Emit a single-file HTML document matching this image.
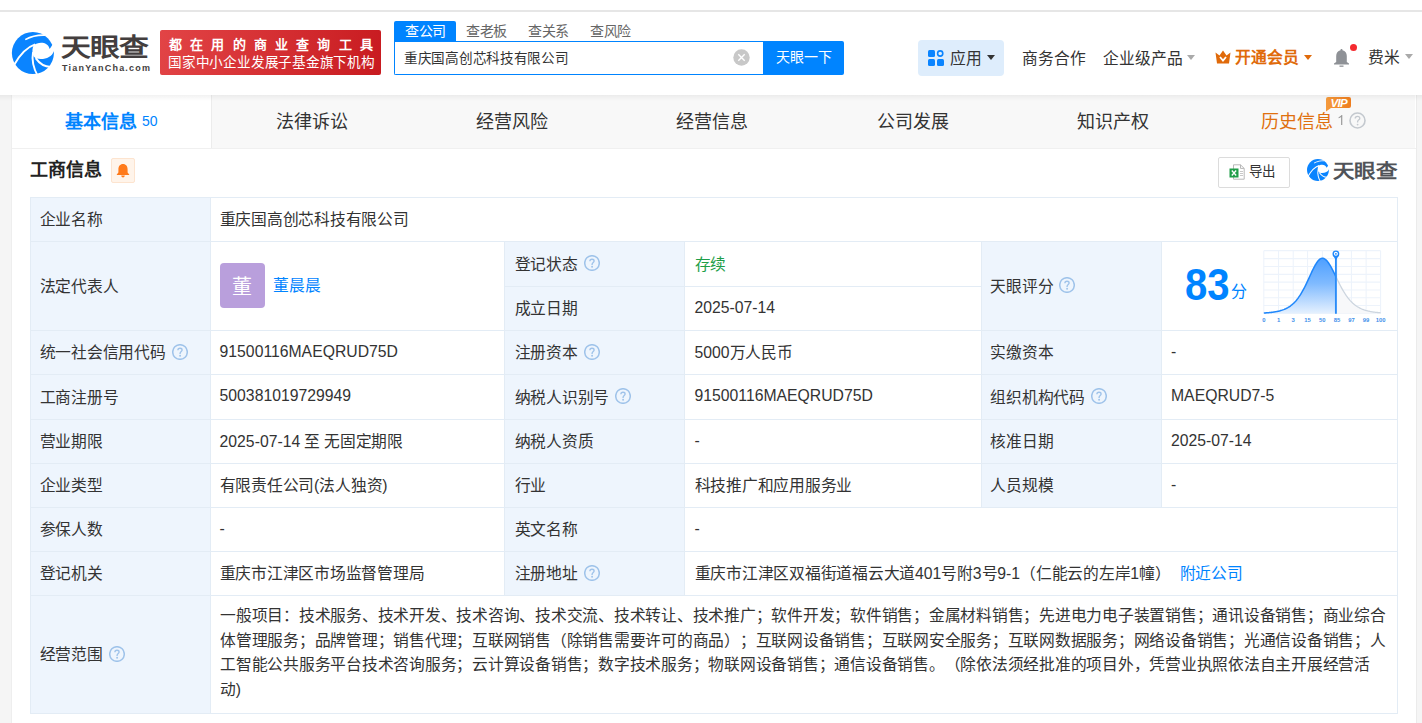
<!DOCTYPE html>
<html lang="zh-CN"><head><meta charset="utf-8">
<style>
*{box-sizing:border-box;margin:0;padding:0}
html,body{text-spacing-trim:space-all;width:1422px;height:723px;overflow:hidden;background:#f5f5f5;font-family:"Liberation Sans",sans-serif;color:#333}
.abs{position:absolute}
#topstrip{position:absolute;left:0;top:0;width:1422px;height:10px;background:#fff}
#topline{position:absolute;left:0;top:10px;width:1422px;height:2px;background:#e6e6e6}
#header{position:absolute;left:0;top:12px;width:1422px;height:83px;background:#fff}
#shadow{position:absolute;left:0;top:95px;width:1422px;height:6px;background:linear-gradient(rgba(0,0,0,0.05),rgba(0,0,0,0));z-index:5}
#panel{position:absolute;left:12px;top:95px;width:1404px;height:640px;background:#fff}
.t{position:absolute;white-space:nowrap;line-height:1}
.cellt{position:absolute;height:22px;display:flex;align-items:center;white-space:nowrap;font-size:15.75px;color:#333;letter-spacing:-0.25px}
.q{margin-left:6px;flex:none}
.l{letter-spacing:0}
.scope{font-size:15.75px;color:#333;letter-spacing:-0.25px}
</style></head><body>
<div id="topstrip"></div>
<div id="topline"></div>
<div id="header"></div>
<svg class="abs" style="left:8px;top:28px" width="50" height="50" viewBox="0 0 723 723">
<circle cx="360" cy="362" r="304" fill="#0a84ff"/>
<path d="M372,246 C430,200 575,185 602,302 C615,285 630,262 640,245 L720,245 L720,335 L664,335 C630,425 530,462 412,442 C350,422 338,320 372,246 Z" fill="#fff"/>
<path d="M250,168 C340,118 450,98 545,104" stroke="#fff" stroke-width="24" fill="none"/>
<path d="M90,532 C170,390 270,280 392,238" stroke="#fff" stroke-width="28" fill="none"/>
<path d="M362,350 C340,470 368,580 430,692" stroke="#fff" stroke-width="28" fill="none"/>
<path d="M400,436 C460,522 530,562 618,564" stroke="#fff" stroke-width="28" fill="none"/>
</svg>
<div class="t" id="logotxt" style="left:61px;top:36px;font-size:24.5px;font-weight:bold;color:#433e3e;transform:scaleX(1.215);transform-origin:0 0">天眼查</div>
<div class="t" id="logoen" style="left:62px;top:64px;font-size:9px;font-weight:bold;color:#433e3e;letter-spacing:1.2px">TianYanCha.com</div>
<div class="abs" id="banner" style="left:160px;top:30px;width:221px;height:45px;border-radius:2px;background:linear-gradient(100deg,#e24446,#c81b20)"></div>
<div class="t" id="ban1" style="left:169px;top:37.5px;font-size:13px;font-weight:bold;color:#fff;letter-spacing:8.2px">都在用的商业查询工具</div>
<div class="t" id="ban2" style="left:168px;top:56px;font-size:13.6px;letter-spacing:-0.21px;font-weight:500;color:#fff">国家中小企业发展子基金旗下机构</div>
<div class="abs" style="left:394px;top:21px;width:62px;height:21px;background:#0084ff;border-radius:2px 2px 0 0"></div>
<div class="t" style="left:405px;top:24px;font-size:14px;letter-spacing:-0.4px;color:#fff">查公司</div>
<div class="t" style="left:466px;top:24px;font-size:14px;letter-spacing:-0.4px;color:#666">查老板</div>
<div class="t" style="left:528px;top:24px;font-size:14px;letter-spacing:-0.4px;color:#666">查关系</div>
<div class="t" style="left:590px;top:24px;font-size:14px;letter-spacing:-0.4px;color:#666">查风险</div>
<div class="abs" style="left:394px;top:41px;width:370px;height:34px;border:1px solid #0084ff;border-right:none;border-radius:0 0 0 2px;background:#fff"></div>
<div class="t" id="srch" style="left:404px;top:52px;font-size:13.6px;letter-spacing:-0.3px;color:#333">重庆国高创芯科技有限公司</div>
<svg class="abs" style="left:733px;top:49px" width="17" height="17" viewBox="0 0 17 17"><circle cx="8.5" cy="8.5" r="8.2" fill="#c8c8c8"/><path d="M5.3,5.3 L11.7,11.7 M11.7,5.3 L5.3,11.7" stroke="#fff" stroke-width="1.4"/></svg>
<div class="abs" style="left:763px;top:41px;width:81px;height:34px;background:#0084ff;border-radius:0 2px 2px 0"></div>
<div class="t" style="left:776px;top:50px;font-size:14px;color:#fff">天眼一下</div>
<div class="abs" style="left:918px;top:40px;width:86px;height:36px;background:#deedfc;border-radius:4px"></div>
<svg class="abs" style="left:928px;top:50px" width="16" height="16" viewBox="0 0 16 16"><rect x="0" y="0" width="7" height="7" rx="1.5" fill="#0a84ff"/><circle cx="12.2" cy="3.5" r="2.6" fill="none" stroke="#0a84ff" stroke-width="1.6"/><rect x="0" y="9" width="7" height="7" rx="1.5" fill="#0a84ff"/><rect x="9" y="9" width="7" height="7" rx="1.5" fill="#0a84ff"/></svg>
<div class="t" style="left:950px;top:51px;font-size:15.75px;color:#333">应用</div>
<svg class="abs" style="left:987px;top:55px" width="8" height="5" viewBox="0 0 8 5"><path d="M0,0 L8,0 L4,5Z" fill="#333"/></svg>
<div class="t" style="left:1022px;top:50.5px;font-size:15.75px;color:#333">商务合作</div>
<div class="t" style="left:1103px;top:50.5px;font-size:15.75px;color:#333">企业级产品</div>
<svg class="abs" style="left:1187px;top:55px" width="8" height="5" viewBox="0 0 8 5"><path d="M0,0 L8,0 L4,5Z" fill="#aaa"/></svg>
<svg class="abs" style="left:1215px;top:50px" width="16" height="14" viewBox="0 0 16 14"><path d="M0.5,2.5 L4.5,5.5 L8,0.5 L11.5,5.5 L15.5,2.5 L14,13.5 L2,13.5 Z" fill="#e06a0a"/><path d="M5,7 L8,10.5 L11,7" stroke="#fff" stroke-width="1.8" fill="none"/></svg>
<div class="t" style="left:1235px;top:50px;font-size:15.75px;font-weight:bold;color:#e06a0a">开通会员</div>
<svg class="abs" style="left:1304px;top:55px" width="8" height="5" viewBox="0 0 8 5"><path d="M0,0 L8,0 L4,5Z" fill="#e06a0a"/></svg>
<svg class="abs" style="left:1333px;top:48px" width="17" height="19" viewBox="0 0 17 19"><path d="M8.5,1 C9.3,1 9.5,1.6 9.5,2.2 C12.3,2.8 13.8,5 13.8,8 L13.8,14 L16,15.5 L16,16.5 L1,16.5 L1,15.5 L3.2,14 L3.2,8 C3.2,5 4.7,2.8 7.5,2.2 C7.5,1.6 7.7,1 8.5,1Z" fill="#8e9196"/><rect x="6.5" y="17.5" width="4" height="1.3" fill="#8e9196"/></svg>
<div class="abs" style="left:1350px;top:44px;width:7px;height:7px;border-radius:50%;background:#f52a2f"></div>
<div class="t" style="left:1368px;top:50px;font-size:15.75px;color:#333">费米</div>
<svg class="abs" style="left:1405px;top:54px" width="8" height="5" viewBox="0 0 8 5"><path d="M0,0 L8,0 L4,5Z" fill="#aaa"/></svg>

<div id="panel"></div>
<div class="abs" style="left:11px;top:95px;width:1px;height:628px;background:#eeeeee"></div>
<div class="abs" style="left:1416px;top:95px;width:1px;height:628px;background:#ebebeb"></div>

<div class="abs" style="left:211px;top:95px;width:1204px;height:53px;background:#f8f8f8"></div>
<div class="abs" style="left:211px;top:95px;width:1px;height:53px;background:#ececec"></div>
<div class="abs" style="left:12px;top:148px;width:1404px;height:1px;background:#f0f0f0"></div>
<div class="t" id="tab1" style="left:65px;top:113px;font-size:18px;font-weight:bold;color:#0084ff">基本信息</div>
<div class="t" id="tab1n" style="left:142px;top:114px;font-size:14px;color:#0084ff">50</div>
<div class="t" style="left:276px;top:113px;font-size:18px;color:#333">法律诉讼</div>
<div class="t" style="left:476px;top:113px;font-size:18px;color:#333">经营风险</div>
<div class="t" style="left:676px;top:113px;font-size:18px;color:#333">经营信息</div>
<div class="t" style="left:877px;top:113px;font-size:18px;color:#333">公司发展</div>
<div class="t" style="left:1077px;top:113px;font-size:18px;color:#333">知识产权</div>
<div class="t" style="left:1261px;top:113px;font-size:18px;color:#e0700f">历史信息</div>
<svg class="abs" style="left:1338px;top:115px" width="6" height="10" viewBox="0 0 6 10"><path d="M4.3,0 L4.3,10 L3.1,10 L3.1,1.9 C2.5,2.5 1.6,3 0.6,3.3 L0.6,2.2 C1.8,1.7 2.9,0.9 3.5,0 Z" fill="#999"/></svg>
<svg class="abs" style="left:1349px;top:112px" width="17" height="17" viewBox="0 0 17 17"><circle cx="8.5" cy="8.5" r="7.5" fill="none" stroke="#c4c9cf" stroke-width="1.6"/><path d="M6.2,6.6 C6.2,5.2 7.2,4.4 8.5,4.4 C9.8,4.4 10.8,5.2 10.8,6.4 C10.8,7.8 8.6,8 8.6,9.8 L8.6,10.4" fill="none" stroke="#c4c9cf" stroke-width="1.3"/><circle cx="8.6" cy="12.6" r="0.9" fill="#c6cad0"/></svg>
<svg class="abs" style="left:1326px;top:96px" width="26" height="16" viewBox="0 0 26 16"><defs><linearGradient id="vg" x1="0" y1="0" x2="1" y2="0"><stop offset="0" stop-color="#f59a3c"/><stop offset="1" stop-color="#ee7d1f"/></linearGradient></defs><path d="M2,1 L23,1 Q25,1 25,3 L25,10 Q25,12 23,12 L5,12 L0,15.5 L0,3 Q0,1 2,1Z" fill="url(#vg)"/><text x="12.8" y="10.6" font-family="Liberation Sans" font-size="11.5" font-weight="bold" font-style="italic" fill="#fff" text-anchor="middle" letter-spacing="-0.6">VIP</text></svg>
<div class="t" id="sec" style="left:30px;top:161px;font-size:18px;font-weight:bold;color:#222">工商信息</div>
<div class="abs" style="left:111px;top:158px;width:24px;height:25px;background:#fff4ea;border:1px solid #fde4cf;border-radius:2px"></div>
<svg class="abs" style="left:116px;top:163px" width="14" height="15" viewBox="0 0 14 15"><path d="M7,1 C10,1 11.6,3.4 11.6,6.4 L11.6,9.6 L13.2,11.4 L13.2,12 L0.8,12 L0.8,11.4 L2.4,9.6 L2.4,6.4 C2.4,3.4 4,1 7,1Z" fill="#ff7a1a"/><path d="M5.2,12.6 L8.8,12.6 C8.8,13.8 8,14.4 7,14.4 C6,14.4 5.2,13.8 5.2,12.6Z" fill="#ff7a1a"/></svg>
<div class="abs" style="left:1218px;top:157px;width:72px;height:31px;border:1px solid #dcdcdc;border-radius:2px;background:#fff"></div>
<svg class="abs" style="left:1229px;top:164px" width="16" height="16" viewBox="0 0 16 16"><path d="M4.5,0.8 L11.5,0.8 L15.2,4.4 L15.2,15.2 L4.5,15.2 Z" fill="#fff" stroke="#b8b8b8" stroke-width="1"/><path d="M11.5,0.8 L11.5,4.4 L15.2,4.4" fill="none" stroke="#b8b8b8" stroke-width="1"/><rect x="11" y="7" width="3" height="1" fill="#c8c8c8"/><rect x="11" y="9" width="3" height="1" fill="#c8c8c8"/><rect x="11" y="11" width="3" height="1" fill="#c8c8c8"/><rect x="0.5" y="4.5" width="9" height="9" fill="#1f9d48"/><path d="M2.8,6.5 L7.2,11.5 M7.2,6.5 L2.8,11.5" stroke="#fff" stroke-width="1.3"/></svg>
<div class="t" style="left:1249px;top:165px;font-size:13.5px;color:#333">导出</div>
<svg class="abs" style="left:1305px;top:156.5px" width="26" height="26" viewBox="0 0 723 723">
<circle cx="360" cy="362" r="304" fill="#0a84ff"/>
<path d="M368,250 C430,200 570,190 602,302 C615,285 630,262 640,245 L720,245 L720,340 L668,340 C630,425 530,460 412,440 C352,420 340,320 368,250 Z" fill="#fff"/>
<path d="M252,168 C340,120 450,98 540,106" stroke="#fff" stroke-width="24" fill="none"/>
<path d="M92,530 C170,390 270,280 392,238" stroke="#fff" stroke-width="28" fill="none"/>
<path d="M364,350 C342,470 370,580 430,690" stroke="#fff" stroke-width="28" fill="none"/>
<path d="M402,436 C460,520 530,560 615,562" stroke="#fff" stroke-width="28" fill="none"/>
</svg>
<div class="t" id="logo2" style="left:1333px;top:161.5px;font-size:19px;font-weight:bold;color:#505358;transform:scaleX(1.13);transform-origin:0 0">天眼查</div>
<!--TABLE-->
<div class="abs" style="left:30px;top:197px;width:180px;height:44px;background:#eef5fd;border-left:1px solid #e3ecf5;border-top:1px solid #e3ecf5"></div>
<div class="cellt" style="left:39.6px;top:207.5px;"><span>企业名称</span></div>
<div class="abs" style="left:210px;top:197px;width:1187px;height:44px;background:#fff;border-left:1px solid #e3ecf5;border-top:1px solid #e3ecf5"></div>
<div class="cellt" style="left:219.6px;top:207.5px;"><span>重庆国高创芯科技有限公司</span></div>
<div class="abs" style="left:30px;top:241px;width:180px;height:89px;background:#eef5fd;border-left:1px solid #e3ecf5;border-top:1px solid #e3ecf5"></div>
<div class="cellt" style="left:39.6px;top:274.0px;"><span>法定代表人</span></div>
<div class="abs" style="left:210px;top:241px;width:294px;height:89px;background:#fff;border-left:1px solid #e3ecf5;border-top:1px solid #e3ecf5"></div>
<div class="abs" style="left:504px;top:241px;width:180px;height:45px;background:#eef5fd;border-left:1px solid #e3ecf5;border-top:1px solid #e3ecf5"></div>
<div class="cellt" style="left:514.5px;top:252.0px;"><span>登记状态</span><svg class="q" width="16" height="16" viewBox="0 0 16 16"><circle cx="8" cy="8" r="7.3" fill="none" stroke="#9fc3ea" stroke-width="1.5"/><path d="M5.9,6.2 C5.9,4.9 6.8,4.2 8,4.2 C9.2,4.2 10.1,4.9 10.1,6 C10.1,7.4 8.1,7.6 8.1,9.3 L8.1,9.9" fill="none" stroke="#9fc3ea" stroke-width="1.35"/><circle cx="8.1" cy="11.8" r="0.95" fill="#9fc3ea"/></svg></div>
<div class="abs" style="left:684px;top:241px;width:297px;height:45px;background:#fff;border-left:1px solid #e3ecf5;border-top:1px solid #e3ecf5"></div>
<div class="cellt" style="left:694.5px;top:252.0px;"><span><span style="color:#1e9e48">存续</span></span></div>
<div class="abs" style="left:504px;top:286px;width:180px;height:44px;background:#eef5fd;border-left:1px solid #e3ecf5;border-top:1px solid #e3ecf5"></div>
<div class="cellt" style="left:514.5px;top:296.5px;"><span>成立日期</span></div>
<div class="abs" style="left:684px;top:286px;width:297px;height:44px;background:#fff;border-left:1px solid #e3ecf5;border-top:1px solid #e3ecf5"></div>
<div class="cellt" style="left:694.5px;top:296.5px;"><span><span class="l">2025-07-14</span></span></div>
<div class="abs" style="left:981px;top:241px;width:180px;height:89px;background:#eef5fd;border-left:1px solid #e3ecf5;border-top:1px solid #e3ecf5"></div>
<div class="cellt" style="left:990.4px;top:274.0px;"><span>天眼评分</span><svg class="q" width="16" height="16" viewBox="0 0 16 16"><circle cx="8" cy="8" r="7.3" fill="none" stroke="#9fc3ea" stroke-width="1.5"/><path d="M5.9,6.2 C5.9,4.9 6.8,4.2 8,4.2 C9.2,4.2 10.1,4.9 10.1,6 C10.1,7.4 8.1,7.6 8.1,9.3 L8.1,9.9" fill="none" stroke="#9fc3ea" stroke-width="1.35"/><circle cx="8.1" cy="11.8" r="0.95" fill="#9fc3ea"/></svg></div>
<div class="abs" style="left:1161px;top:241px;width:236px;height:89px;background:#fff;border-left:1px solid #e3ecf5;border-top:1px solid #e3ecf5"></div>
<div class="abs" style="left:30px;top:330px;width:180px;height:44px;background:#eef5fd;border-left:1px solid #e3ecf5;border-top:1px solid #e3ecf5"></div>
<div class="cellt" style="left:39.6px;top:340.5px;"><span>统一社会信用代码</span><svg class="q" width="16" height="16" viewBox="0 0 16 16"><circle cx="8" cy="8" r="7.3" fill="none" stroke="#9fc3ea" stroke-width="1.5"/><path d="M5.9,6.2 C5.9,4.9 6.8,4.2 8,4.2 C9.2,4.2 10.1,4.9 10.1,6 C10.1,7.4 8.1,7.6 8.1,9.3 L8.1,9.9" fill="none" stroke="#9fc3ea" stroke-width="1.35"/><circle cx="8.1" cy="11.8" r="0.95" fill="#9fc3ea"/></svg></div>
<div class="abs" style="left:210px;top:330px;width:294px;height:44px;background:#fff;border-left:1px solid #e3ecf5;border-top:1px solid #e3ecf5"></div>
<div class="cellt" style="left:219.6px;top:340.5px;"><span><span class="l">91500116MAEQRUD75D</span></span></div>
<div class="abs" style="left:504px;top:330px;width:180px;height:44px;background:#eef5fd;border-left:1px solid #e3ecf5;border-top:1px solid #e3ecf5"></div>
<div class="cellt" style="left:514.5px;top:340.5px;"><span>注册资本</span><svg class="q" width="16" height="16" viewBox="0 0 16 16"><circle cx="8" cy="8" r="7.3" fill="none" stroke="#9fc3ea" stroke-width="1.5"/><path d="M5.9,6.2 C5.9,4.9 6.8,4.2 8,4.2 C9.2,4.2 10.1,4.9 10.1,6 C10.1,7.4 8.1,7.6 8.1,9.3 L8.1,9.9" fill="none" stroke="#9fc3ea" stroke-width="1.35"/><circle cx="8.1" cy="11.8" r="0.95" fill="#9fc3ea"/></svg></div>
<div class="abs" style="left:684px;top:330px;width:297px;height:44px;background:#fff;border-left:1px solid #e3ecf5;border-top:1px solid #e3ecf5"></div>
<div class="cellt" style="left:694.5px;top:340.5px;"><span><span class="l">5000</span>万人民币</span></div>
<div class="abs" style="left:981px;top:330px;width:180px;height:44px;background:#eef5fd;border-left:1px solid #e3ecf5;border-top:1px solid #e3ecf5"></div>
<div class="cellt" style="left:990.4px;top:340.5px;"><span>实缴资本</span></div>
<div class="abs" style="left:1161px;top:330px;width:236px;height:44px;background:#fff;border-left:1px solid #e3ecf5;border-top:1px solid #e3ecf5"></div>
<div class="cellt" style="left:1171px;top:340.5px;"><span><span class="l">-</span></span></div>
<div class="abs" style="left:30px;top:374px;width:180px;height:45px;background:#eef5fd;border-left:1px solid #e3ecf5;border-top:1px solid #e3ecf5"></div>
<div class="cellt" style="left:39.6px;top:385.0px;"><span>工商注册号</span></div>
<div class="abs" style="left:210px;top:374px;width:294px;height:45px;background:#fff;border-left:1px solid #e3ecf5;border-top:1px solid #e3ecf5"></div>
<div class="cellt" style="left:219.6px;top:385.0px;"><span><span class="l">500381019729949</span></span></div>
<div class="abs" style="left:504px;top:374px;width:180px;height:45px;background:#eef5fd;border-left:1px solid #e3ecf5;border-top:1px solid #e3ecf5"></div>
<div class="cellt" style="left:514.5px;top:385.0px;"><span>纳税人识别号</span><svg class="q" width="16" height="16" viewBox="0 0 16 16"><circle cx="8" cy="8" r="7.3" fill="none" stroke="#9fc3ea" stroke-width="1.5"/><path d="M5.9,6.2 C5.9,4.9 6.8,4.2 8,4.2 C9.2,4.2 10.1,4.9 10.1,6 C10.1,7.4 8.1,7.6 8.1,9.3 L8.1,9.9" fill="none" stroke="#9fc3ea" stroke-width="1.35"/><circle cx="8.1" cy="11.8" r="0.95" fill="#9fc3ea"/></svg></div>
<div class="abs" style="left:684px;top:374px;width:297px;height:45px;background:#fff;border-left:1px solid #e3ecf5;border-top:1px solid #e3ecf5"></div>
<div class="cellt" style="left:694.5px;top:385.0px;"><span><span class="l">91500116MAEQRUD75D</span></span></div>
<div class="abs" style="left:981px;top:374px;width:180px;height:45px;background:#eef5fd;border-left:1px solid #e3ecf5;border-top:1px solid #e3ecf5"></div>
<div class="cellt" style="left:990.4px;top:385.0px;"><span>组织机构代码</span><svg class="q" width="16" height="16" viewBox="0 0 16 16"><circle cx="8" cy="8" r="7.3" fill="none" stroke="#9fc3ea" stroke-width="1.5"/><path d="M5.9,6.2 C5.9,4.9 6.8,4.2 8,4.2 C9.2,4.2 10.1,4.9 10.1,6 C10.1,7.4 8.1,7.6 8.1,9.3 L8.1,9.9" fill="none" stroke="#9fc3ea" stroke-width="1.35"/><circle cx="8.1" cy="11.8" r="0.95" fill="#9fc3ea"/></svg></div>
<div class="abs" style="left:1161px;top:374px;width:236px;height:45px;background:#fff;border-left:1px solid #e3ecf5;border-top:1px solid #e3ecf5"></div>
<div class="cellt" style="left:1171px;top:385.0px;"><span><span class="l">MAEQRUD7-5</span></span></div>
<div class="abs" style="left:30px;top:419px;width:180px;height:44px;background:#eef5fd;border-left:1px solid #e3ecf5;border-top:1px solid #e3ecf5"></div>
<div class="cellt" style="left:39.6px;top:429.5px;"><span>营业期限</span></div>
<div class="abs" style="left:210px;top:419px;width:294px;height:44px;background:#fff;border-left:1px solid #e3ecf5;border-top:1px solid #e3ecf5"></div>
<div class="cellt" style="left:219.6px;top:429.5px;"><span><span class="l">2025-07-14</span> 至 无固定期限</span></div>
<div class="abs" style="left:504px;top:419px;width:180px;height:44px;background:#eef5fd;border-left:1px solid #e3ecf5;border-top:1px solid #e3ecf5"></div>
<div class="cellt" style="left:514.5px;top:429.5px;"><span>纳税人资质</span></div>
<div class="abs" style="left:684px;top:419px;width:297px;height:44px;background:#fff;border-left:1px solid #e3ecf5;border-top:1px solid #e3ecf5"></div>
<div class="cellt" style="left:694.5px;top:429.5px;"><span><span class="l">-</span></span></div>
<div class="abs" style="left:981px;top:419px;width:180px;height:44px;background:#eef5fd;border-left:1px solid #e3ecf5;border-top:1px solid #e3ecf5"></div>
<div class="cellt" style="left:990.4px;top:429.5px;"><span>核准日期</span></div>
<div class="abs" style="left:1161px;top:419px;width:236px;height:44px;background:#fff;border-left:1px solid #e3ecf5;border-top:1px solid #e3ecf5"></div>
<div class="cellt" style="left:1171px;top:429.5px;"><span><span class="l">2025-07-14</span></span></div>
<div class="abs" style="left:30px;top:463px;width:180px;height:44px;background:#eef5fd;border-left:1px solid #e3ecf5;border-top:1px solid #e3ecf5"></div>
<div class="cellt" style="left:39.6px;top:473.5px;"><span>企业类型</span></div>
<div class="abs" style="left:210px;top:463px;width:294px;height:44px;background:#fff;border-left:1px solid #e3ecf5;border-top:1px solid #e3ecf5"></div>
<div class="cellt" style="left:219.6px;top:473.5px;"><span>有限责任公司<span class="l">(</span>法人独资<span class="l">)</span></span></div>
<div class="abs" style="left:504px;top:463px;width:180px;height:44px;background:#eef5fd;border-left:1px solid #e3ecf5;border-top:1px solid #e3ecf5"></div>
<div class="cellt" style="left:514.5px;top:473.5px;"><span>行业</span></div>
<div class="abs" style="left:684px;top:463px;width:297px;height:44px;background:#fff;border-left:1px solid #e3ecf5;border-top:1px solid #e3ecf5"></div>
<div class="cellt" style="left:694.5px;top:473.5px;"><span>科技推广和应用服务业</span></div>
<div class="abs" style="left:981px;top:463px;width:180px;height:44px;background:#eef5fd;border-left:1px solid #e3ecf5;border-top:1px solid #e3ecf5"></div>
<div class="cellt" style="left:990.4px;top:473.5px;"><span>人员规模</span></div>
<div class="abs" style="left:1161px;top:463px;width:236px;height:44px;background:#fff;border-left:1px solid #e3ecf5;border-top:1px solid #e3ecf5"></div>
<div class="cellt" style="left:1171px;top:473.5px;"><span><span class="l">-</span></span></div>
<div class="abs" style="left:30px;top:507px;width:180px;height:44px;background:#eef5fd;border-left:1px solid #e3ecf5;border-top:1px solid #e3ecf5"></div>
<div class="cellt" style="left:39.6px;top:517.5px;"><span>参保人数</span></div>
<div class="abs" style="left:210px;top:507px;width:294px;height:44px;background:#fff;border-left:1px solid #e3ecf5;border-top:1px solid #e3ecf5"></div>
<div class="cellt" style="left:219.6px;top:517.5px;"><span><span class="l">-</span></span></div>
<div class="abs" style="left:504px;top:507px;width:180px;height:44px;background:#eef5fd;border-left:1px solid #e3ecf5;border-top:1px solid #e3ecf5"></div>
<div class="cellt" style="left:514.5px;top:517.5px;"><span>英文名称</span></div>
<div class="abs" style="left:684px;top:507px;width:713px;height:44px;background:#fff;border-left:1px solid #e3ecf5;border-top:1px solid #e3ecf5"></div>
<div class="cellt" style="left:694.5px;top:517.5px;"><span><span class="l">-</span></span></div>
<div class="abs" style="left:30px;top:551px;width:180px;height:44px;background:#eef5fd;border-left:1px solid #e3ecf5;border-top:1px solid #e3ecf5"></div>
<div class="cellt" style="left:39.6px;top:561.5px;"><span>登记机关</span></div>
<div class="abs" style="left:210px;top:551px;width:294px;height:44px;background:#fff;border-left:1px solid #e3ecf5;border-top:1px solid #e3ecf5"></div>
<div class="cellt" style="left:219.6px;top:561.5px;"><span>重庆市江津区市场监督管理局</span></div>
<div class="abs" style="left:504px;top:551px;width:180px;height:44px;background:#eef5fd;border-left:1px solid #e3ecf5;border-top:1px solid #e3ecf5"></div>
<div class="cellt" style="left:514.5px;top:561.5px;"><span>注册地址</span><svg class="q" width="16" height="16" viewBox="0 0 16 16"><circle cx="8" cy="8" r="7.3" fill="none" stroke="#9fc3ea" stroke-width="1.5"/><path d="M5.9,6.2 C5.9,4.9 6.8,4.2 8,4.2 C9.2,4.2 10.1,4.9 10.1,6 C10.1,7.4 8.1,7.6 8.1,9.3 L8.1,9.9" fill="none" stroke="#9fc3ea" stroke-width="1.35"/><circle cx="8.1" cy="11.8" r="0.95" fill="#9fc3ea"/></svg></div>
<div class="abs" style="left:684px;top:551px;width:713px;height:44px;background:#fff;border-left:1px solid #e3ecf5;border-top:1px solid #e3ecf5"></div>
<div class="cellt" style="left:694.5px;top:561.5px;"><span>重庆市江津区双福街道福云大道<span class="l">401</span>号附<span class="l">3</span>号<span class="l">9-1</span>（仁能云的左岸<span class="l">1</span>幢）<span style="color:#0084ff;margin-left:9px">附近公司</span></span></div>
<div class="abs" style="left:30px;top:595px;width:180px;height:118px;background:#eef5fd;border-left:1px solid #e3ecf5;border-top:1px solid #e3ecf5"></div>
<div class="cellt" style="left:39.6px;top:642.5px;"><span>经营范围</span><svg class="q" width="16" height="16" viewBox="0 0 16 16"><circle cx="8" cy="8" r="7.3" fill="none" stroke="#9fc3ea" stroke-width="1.5"/><path d="M5.9,6.2 C5.9,4.9 6.8,4.2 8,4.2 C9.2,4.2 10.1,4.9 10.1,6 C10.1,7.4 8.1,7.6 8.1,9.3 L8.1,9.9" fill="none" stroke="#9fc3ea" stroke-width="1.35"/><circle cx="8.1" cy="11.8" r="0.95" fill="#9fc3ea"/></svg></div>
<div class="abs" style="left:210px;top:595px;width:1187px;height:118px;background:#fff;border-left:1px solid #e3ecf5;border-top:1px solid #e3ecf5"></div>
<div class="abs" style="left:1397px;top:197px;width:1px;height:517px;background:#e3ecf5"></div>
<div class="abs" style="left:30px;top:713px;width:1368px;height:1px;background:#e3ecf5"></div>
<div class="t scope" style="left:220px;top:608.0px">一般项目：技术服务、技术开发、技术咨询、技术交流、技术转让、技术推广；软件开发；软件销售；金属材料销售；先进电力电子装置销售；通讯设备销售；商业综合</div>
<div class="t scope" style="left:220px;top:632.6px">体管理服务；品牌管理；销售代理；互联网销售（除销售需要许可的商品）；互联网设备销售；互联网安全服务；互联网数据服务；网络设备销售；光通信设备销售；人</div>
<div class="t scope" style="left:220px;top:657.2px">工智能公共服务平台技术咨询服务；云计算设备销售；数字技术服务；物联网设备销售；通信设备销售。（除依法须经批准的项目外，凭营业执照依法自主开展经营活</div>
<div class="t scope" style="left:220px;top:681.8px">动)</div>
<div class="abs" style="left:220px;top:263px;width:45px;height:45px;border-radius:4px;background:#b99fdc"></div>
<div class="t" style="left:232px;top:277px;font-size:20px;color:#fff">董</div>
<div class="t" style="left:273px;top:278px;font-size:15.75px;color:#0084ff">董晨晨</div>
<!--/TABLE-->
<!--CHART-->
<svg class="abs" style="left:1255px;top:243px" width="135" height="85" viewBox="0 0 1148 723">
<defs><linearGradient id="cg" x1="0" y1="0" x2="0" y2="1"><stop offset="0" stop-color="#4d9fff"/><stop offset="0.45" stop-color="#7fbaff"/><stop offset="1" stop-color="#e6f1fe"/></linearGradient></defs>
<line x1="75" y1="65" x2="75" y2="600" stroke="#edf3fb" stroke-width="9"/>
<line x1="200" y1="65" x2="200" y2="600" stroke="#edf3fb" stroke-width="9"/>
<line x1="325" y1="65" x2="325" y2="600" stroke="#edf3fb" stroke-width="9"/>
<line x1="447" y1="65" x2="447" y2="600" stroke="#edf3fb" stroke-width="9"/>
<line x1="573" y1="65" x2="573" y2="600" stroke="#edf3fb" stroke-width="9"/>
<line x1="697" y1="65" x2="697" y2="600" stroke="#edf3fb" stroke-width="9"/>
<line x1="820" y1="65" x2="820" y2="600" stroke="#edf3fb" stroke-width="9"/>
<line x1="945" y1="65" x2="945" y2="600" stroke="#edf3fb" stroke-width="9"/>
<line x1="1068" y1="65" x2="1068" y2="600" stroke="#edf3fb" stroke-width="9"/>
<line x1="75" y1="65" x2="1068" y2="65" stroke="#edf3fb" stroke-width="9"/>
<line x1="75" y1="133" x2="1068" y2="133" stroke="#edf3fb" stroke-width="9"/>
<line x1="75" y1="200" x2="1068" y2="200" stroke="#edf3fb" stroke-width="9"/>
<line x1="75" y1="267" x2="1068" y2="267" stroke="#edf3fb" stroke-width="9"/>
<line x1="75" y1="333" x2="1068" y2="333" stroke="#edf3fb" stroke-width="9"/>
<line x1="75" y1="400" x2="1068" y2="400" stroke="#edf3fb" stroke-width="9"/>
<line x1="75" y1="465" x2="1068" y2="465" stroke="#edf3fb" stroke-width="9"/>
<line x1="75" y1="532" x2="1068" y2="532" stroke="#edf3fb" stroke-width="9"/>
<line x1="75" y1="600" x2="1068" y2="600" stroke="#edf3fb" stroke-width="9"/>
<polygon points="688,600 688,286.2 694,298.6 700,310.9 706,323.2 712,335.2 718,347.1 724,358.8 730,370.2 736,381.3 742,392.1 748,402.6 754,412.7 760,422.5 766,431.9 772,441.0 778,449.7 784,458.0 790,466.0 796,473.5 802,480.8 808,487.7 814,494.2 820,500.4 826,506.3 832,511.9 838,517.2 844,522.2 850,527.0 856,531.5 862,535.7 868,539.7 874,543.4 880,546.9 886,550.3 892,553.4 898,556.3 904,559.1 910,561.7 916,564.1 922,566.4 928,568.6 934,570.6 940,572.5 946,574.3 952,575.9 958,577.5 964,578.9 970,580.3 976,581.6 982,582.8 988,583.9 994,584.9 1000,585.9 1006,586.9 1012,587.7 1018,588.5 1024,589.3 1030,590.0 1036,590.6 1042,591.2 1048,591.8 1054,592.4 1060,592.9 1066,593.3 1068,593.5 1068,600" fill="#f7f8fa"/>
<polyline points="688,286.2 694,298.6 700,310.9 706,323.2 712,335.2 718,347.1 724,358.8 730,370.2 736,381.3 742,392.1 748,402.6 754,412.7 760,422.5 766,431.9 772,441.0 778,449.7 784,458.0 790,466.0 796,473.5 802,480.8 808,487.7 814,494.2 820,500.4 826,506.3 832,511.9 838,517.2 844,522.2 850,527.0 856,531.5 862,535.7 868,539.7 874,543.4 880,546.9 886,550.3 892,553.4 898,556.3 904,559.1 910,561.7 916,564.1 922,566.4 928,568.6 934,570.6 940,572.5 946,574.3 952,575.9 958,577.5 964,578.9 970,580.3 976,581.6 982,582.8 988,583.9 994,584.9 1000,585.9 1006,586.9 1012,587.7 1018,588.5 1024,589.3 1030,590.0 1036,590.6 1042,591.2 1048,591.8 1054,592.4 1060,592.9 1066,593.3 1068,593.5" fill="none" stroke="#ccd5df" stroke-width="11"/>
<polygon points="75,600 75,595.5 81,595.2 87,594.8 93,594.4 99,594.0 105,593.6 111,593.1 117,592.6 123,592.0 129,591.4 135,590.8 141,590.1 147,589.4 153,588.6 159,587.7 165,586.8 171,585.8 177,584.8 183,583.7 189,582.4 195,581.1 201,579.8 207,578.3 213,576.7 219,574.9 225,573.1 231,571.1 237,569.0 243,566.8 249,564.4 255,561.8 261,559.1 267,556.1 273,553.0 279,549.6 285,546.0 291,542.2 297,538.2 303,533.9 309,529.3 315,524.4 321,519.2 327,513.7 333,507.8 339,501.6 345,495.1 351,488.2 357,480.9 363,473.2 369,465.1 375,456.6 381,447.7 387,438.4 393,428.7 399,418.6 405,408.0 411,397.1 417,385.8 423,374.1 429,362.1 435,349.8 441,337.2 447,324.5 453,311.5 459,298.4 465,285.2 471,272.1 477,259.0 483,246.1 489,233.5 495,221.2 501,209.2 507,197.8 513,187.1 519,177.0 525,167.6 531,159.2 537,151.7 543,145.2 549,139.8 555,135.5 561,132.5 567,130.6 573,130.0 579,130.6 585,132.2 591,134.9 597,138.7 603,143.5 609,149.3 615,156.1 621,163.7 627,172.1 633,181.2 639,191.0 645,201.4 651,212.3 657,223.6 663,235.3 669,247.2 675,259.4 681,271.7 687,284.1 688,286.2 688,600" fill="url(#cg)"/>
<polyline points="75,595.5 81,595.2 87,594.8 93,594.4 99,594.0 105,593.6 111,593.1 117,592.6 123,592.0 129,591.4 135,590.8 141,590.1 147,589.4 153,588.6 159,587.7 165,586.8 171,585.8 177,584.8 183,583.7 189,582.4 195,581.1 201,579.8 207,578.3 213,576.7 219,574.9 225,573.1 231,571.1 237,569.0 243,566.8 249,564.4 255,561.8 261,559.1 267,556.1 273,553.0 279,549.6 285,546.0 291,542.2 297,538.2 303,533.9 309,529.3 315,524.4 321,519.2 327,513.7 333,507.8 339,501.6 345,495.1 351,488.2 357,480.9 363,473.2 369,465.1 375,456.6 381,447.7 387,438.4 393,428.7 399,418.6 405,408.0 411,397.1 417,385.8 423,374.1 429,362.1 435,349.8 441,337.2 447,324.5 453,311.5 459,298.4 465,285.2 471,272.1 477,259.0 483,246.1 489,233.5 495,221.2 501,209.2 507,197.8 513,187.1 519,177.0 525,167.6 531,159.2 537,151.7 543,145.2 549,139.8 555,135.5 561,132.5 567,130.6 573,130.0 579,130.6 585,132.2 591,134.9 597,138.7 603,143.5 609,149.3 615,156.1 621,163.7 627,172.1 633,181.2 639,191.0 645,201.4 651,212.3 657,223.6 663,235.3 669,247.2 675,259.4 681,271.7 687,284.1 688,286.2" fill="none" stroke="#1f87fb" stroke-width="13" stroke-linejoin="round"/>
<rect x="680" y="120" width="16" height="482" fill="#2a8cf8"/>
<path d="M662,104 L714,104 L688,146 Z" fill="#1f87fb"/>
<circle cx="688" cy="92" r="29" fill="#1f87fb"/><circle cx="688" cy="92" r="17" fill="#fff"/><circle cx="688" cy="92" r="8" fill="#1f87fb"/>
<text x="75" y="670" font-family="Liberation Sans" font-size="50" font-weight="bold" fill="#3f90ea" text-anchor="middle">0</text>
<text x="200" y="670" font-family="Liberation Sans" font-size="50" font-weight="bold" fill="#3f90ea" text-anchor="middle">1</text>
<text x="325" y="670" font-family="Liberation Sans" font-size="50" font-weight="bold" fill="#3f90ea" text-anchor="middle">3</text>
<text x="447" y="670" font-family="Liberation Sans" font-size="50" font-weight="bold" fill="#3f90ea" text-anchor="middle">15</text>
<text x="573" y="670" font-family="Liberation Sans" font-size="50" font-weight="bold" fill="#3f90ea" text-anchor="middle">50</text>
<text x="697" y="670" font-family="Liberation Sans" font-size="50" font-weight="bold" fill="#3f90ea" text-anchor="middle">85</text>
<text x="820" y="670" font-family="Liberation Sans" font-size="50" font-weight="bold" fill="#3f90ea" text-anchor="middle">97</text>
<text x="945" y="670" font-family="Liberation Sans" font-size="50" font-weight="bold" fill="#3f90ea" text-anchor="middle">99</text>
<text x="1068" y="670" font-family="Liberation Sans" font-size="50" font-weight="bold" fill="#3f90ea" text-anchor="middle">100</text>
</svg>
<div class="t" id="score" style="left:1184.5px;top:263px;font-size:44.5px;font-weight:bold;color:#0084ff;transform:scaleX(0.9);transform-origin:0 0">83</div>
<div class="t" style="left:1231px;top:283.5px;font-size:16px;color:#0084ff">分</div>
<!--/CHART-->
<div id="shadow"></div>
</body></html>
